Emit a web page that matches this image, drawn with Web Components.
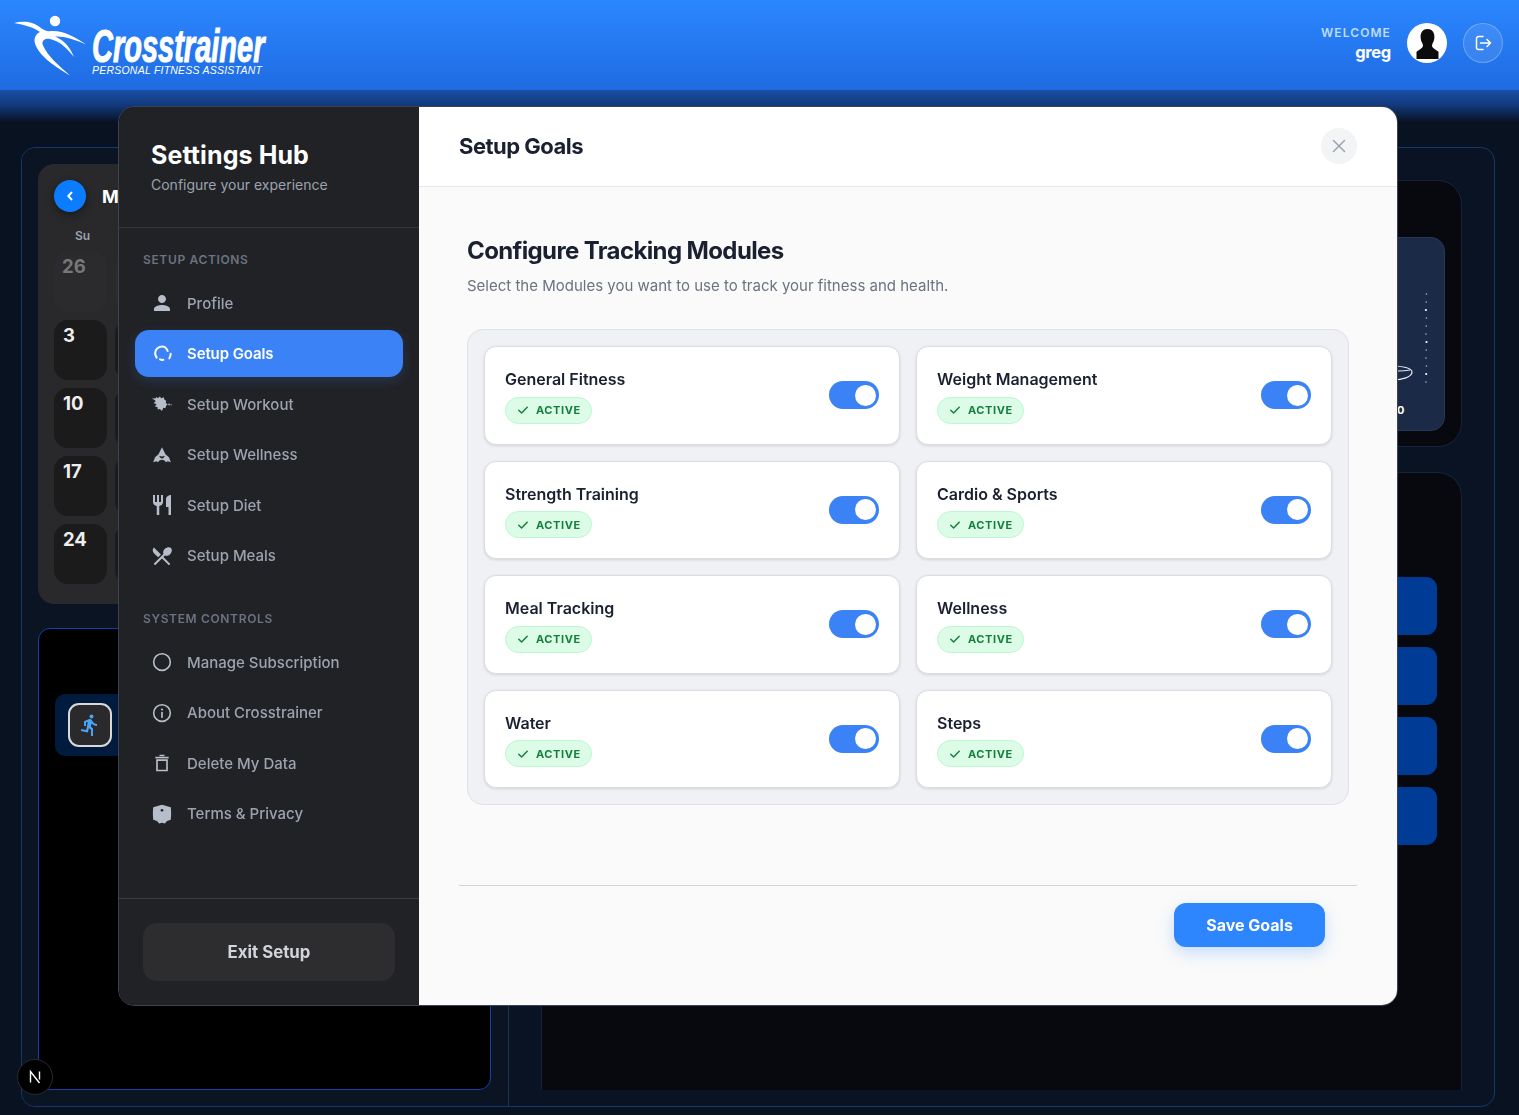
<!DOCTYPE html>
<html lang="en">
<head>
<meta charset="utf-8">
<title>Crosstrainer</title>
<style>
  html, body { height: 100%; }
  body {
    margin: 0;
    overflow: hidden;
    background: #081221;
    font-family: 'Inter', 'Liberation Sans', sans-serif;
  }
</style>
</head>
<body>
<app-header></app-header>
<dash-board></dash-board>
<settings-hub></settings-hub>
<dev-badge></dev-badge>

<script>
const ICONS = {
  profile: '<path fill="currentColor" d="M12 12c2.21 0 4-1.79 4-4s-1.79-4-4-4-4 1.79-4 4 1.79 4 4 4zm0 2c-2.67 0-8 1.34-8 4v2h16v-2c0-2.66-5.33-4-8-4z"/>',
  goals: '<g fill="none" stroke="currentColor" stroke-width="2.400" stroke-linecap="round"><path d="M5.600 16.400C3.400 13 3.300 9.800 5 7c2-3.400 6.500-5 10-3.600 1.600.7 3 2.800 3.800 5"/><path d="M22.400 11.600c0 2-.6 4-1.600 5.600"/><path d="M9.600 18.400c1.300.6 2.700.8 4 .6"/></g>',
  workout: '<path fill="currentColor" d="M0 5l4 .5L5.500 3.500 7 5l2.500-2L11 5l3-1 1 3 2 1-.5 3 2.500 1-2 2-1 3-2.500-.5-1.500 4-2.500-2.500-2.500.5-.5-3-3-.5 2-3-3.500-1 2.500-2.500z"/><circle cx="20.500" cy="12.500" r="1" fill="currentColor"/><circle cx="23" cy="13" r=".8" fill="currentColor"/>',
  wellness: '<path fill="currentColor" d="M12 2l4.500 9 4.500 4 2.500 6.500-4-1.500-2.500 1.500c-.6-2-2.600-3.200-5-3.200S7.600 19.600 7 21.500L4.500 20l-4 1.500L3 15l4.500-4z"/><path fill="#212226" d="M8.500 13c1.600 1.300 5.400 1.300 7 0-.5 2.400-1.900 3.400-3.500 3.400S9 15.400 8.500 13z"/>',
  diet: '<path fill="currentColor" d="M11 9H9V2H7v7H5V2H3v7c0 2.120 1.660 3.840 3.750 3.970V22h2.500v-9.030C11.340 12.840 13 11.120 13 9V2h-2v7zm5-3v8h2.500v8H21V2c-2.760 0-5 2.240-5 4z"/>',
  meals: '<path fill="currentColor" d="M8.100 13.340l2.830-2.830L3.910 3.500c-1.560 1.560-1.560 4.090 0 5.660l4.190 4.180zm6.780-1.810c1.530.71 3.680.21 5.270-1.380 1.910-1.910 2.280-4.650.81-6.120-1.460-1.460-4.200-1.100-6.120.81-1.590 1.590-2.090 3.740-1.380 5.270L3.700 19.870l1.410 1.410L12 14.410l6.880 6.880 1.410-1.410L13.410 13l1.470-1.470z"/>',
  subscription: '<circle cx="12" cy="12" r="10" fill="none" stroke="currentColor" stroke-width="1.900"/>',
  about: '<circle cx="12" cy="12" r="10" fill="none" stroke="currentColor" stroke-width="1.900"/><path d="M12 11.500v5.500" stroke="currentColor" stroke-width="2" stroke-linecap="round"/><circle cx="12" cy="7.800" r="1.300" fill="currentColor"/>',
  trash: '<g fill="none" stroke="currentColor" stroke-width="2"><path d="M4 5.500h16"/><path d="M9 3h6" stroke-width="1.800"/><path d="M6 8.500h12V21H6z"/></g>',
  shield: '<path fill="currentColor" d="M12 1l10.500 3c.6 4 .6 10 0 15L18 20.500l-2.500 3-3.500-1-3.500 1-2.500-3L1.500 19c-.6-5-.6-11 0-15z"/><circle cx="12" cy="7.500" r="1.600" fill="#212226"/>'
};
// the filled icons fill less of their 24 box than the hand drawn ones
const ICON_BOX = { profile: '2 2 20 20', diet: '2 2 20 20', meals: '2 2 20 20', wellness: '-1 -1 26 26' };

class AppHeader extends HTMLElement {
  constructor() {
    super();
    this.attachShadow({ mode: 'open' });
  }

  connectedCallback() {
    this.shadowRoot.innerHTML = `
      <style>
        :host {
          display: block;
          position: relative;
          z-index: 1;
          height: 90px;
          background: linear-gradient(180deg, #2b87ff 0%, #1f6be2 100%);
          color: #fff;
          font-family: 'Inter', 'Liberation Sans', sans-serif;
        }
        :host::after {
          content: '';
          position: absolute;
          left: 0;
          right: 0;
          top: 90px;
          height: 33px;
          background: linear-gradient(180deg, #1a4fa6 0%, #123a7c 45%, #07101f 100%);
        }
        header {
          display: flex;
          justify-content: space-between;
          align-items: center;
          height: 100%;
          padding: 0 16px 0 14px;
        }
        .brand { display: flex; align-items: flex-start; align-self: flex-start; }
        .brand svg { display: block; width: 74px; height: 64px; margin-top: 12px; }
        .words { margin: 27px 0 0 4px; width: 176px; }
        .name {
          display: block;
          height: 37px;
          font: italic 700 47px/37px 'Liberation Sans', sans-serif;
          -webkit-text-stroke: 1.100px #fff;
          transform: scaleX(.617);
          transform-origin: left center;
          white-space: nowrap;
        }
        .tag {
          display: block;
          font: italic 400 10.500px/12px 'Liberation Sans', sans-serif;
          letter-spacing: .22px;
          white-space: nowrap;
        }
        .user { display: flex; align-items: center; padding-bottom: 4px; }
        .hello { text-align: right; margin-right: 16px; }
        .hello small {
          display: block;
          font-size: 12px;
          line-height: 16px;
          font-weight: 600;
          letter-spacing: 1.100px;
          color: #bfdbfe;
        }
        .hello b { display: block; margin-top: 1px; font-size: 16.500px; line-height: 20px; font-weight: 700; letter-spacing: -.3px; }
        .avatar {
          width: 40px;
          height: 40px;
          border-radius: 50%;
          background: #fff;
          overflow: hidden;
          margin-right: 16px;
        }
        .avatar svg { display: block; }
        .out {
          display: flex;
          align-items: center;
          justify-content: center;
          width: 38px;
          height: 38px;
          border-radius: 50%;
          background: rgba(255,255,255,.1);
          border: 1px solid rgba(255,255,255,.25);
        }
      </style>
      <header>
        <div class="brand">
          <svg viewBox="14 12 74 64" aria-hidden="true">
            <circle cx="55" cy="21" r="5.200" fill="#fff"/>
            <path fill="#fff" d="M14 23c9-2.500 19-1.800 27 5 3 2.500 6 3.600 11 3 11-.5 23 6 34 13.500-11-5-22-8.500-31-8 7 3 14 8 19 20.500-6-7.500-13-15.500-24-18-5-.8-9 1.500-7 6.500 5 11 16 20 27 30-14-8.500-31-19-35-32-1.600-5.500 1-9.500 5-11.500-7-5-15-7-26-9z"/>
          </svg>
          <div class="words">
            <span class="name">Crosstrainer</span>
            <span class="tag">PERSONAL FITNESS ASSISTANT</span>
          </div>
        </div>
        <div class="user">
          <div class="hello"><small>WELCOME</small><b>greg</b></div>
          <div class="avatar">
            <svg width="40" height="40" viewBox="0 0 40 40">
              <path fill="#0b0b0b" d="M20.500 6c4.500 0 7 3.300 6.900 8-.1 2.500-.6 4.200-1.400 5.600-.7 1.400-1.200 2.900-.8 4.200 1 2 4 3 6.300 5V36H9.500v-7.200c2.300-2 5.300-3 6.300-5 .4-1.300-.1-2.800-.8-4.200-.8-1.400-1.300-3.100-1.400-5.600C13.500 9.300 16 6 20.500 6z"/>
            </svg>
          </div>
          <div class="out">
            <svg width="20" height="20" viewBox="0 0 20 20" fill="none" stroke="#fff" stroke-width="1.500" stroke-linecap="round" stroke-linejoin="round">
              <path d="M10 3.500H5.500a2 2 0 0 0-2 2v9a2 2 0 0 0 2 2H10"/>
              <path d="M7.500 10h10M14 6.500l3.500 3.500-3.500 3.500"/>
            </svg>
          </div>
        </div>
      </header>
    `;
  }
}

class CalPanel extends HTMLElement {
  constructor() {
    super();
    this.attachShadow({ mode: 'open' });
  }

  connectedCallback() {
    const weeks = [3, 10, 17, 24];
    let cells = '<div class="day old">26</div>' + '<div class="day old"></div>'.repeat(6);
    weeks.forEach((n) => {
      cells += `<div class="day">${n}</div>` + '<div class="day"></div>'.repeat(6);
    });
    this.shadowRoot.innerHTML = `
      <style>
        :host {
          display: block;
          height: 440px;
          box-sizing: border-box;
          padding: 16px;
          background: #29292b;
          border-radius: 16px;
          color: #fff;
        }
        .top { display: flex; align-items: center; gap: 16px; height: 32px; }
        .back {
          display: flex;
          align-items: center;
          justify-content: center;
          width: 32px;
          height: 32px;
          border-radius: 50%;
          background: #0b7bff;
          box-shadow: 0 3px 8px rgba(0,0,0,.4);
        }
        .month { font-size: 18px; font-weight: 700; }
        .dow { width: 53px; margin-top: 16px; text-align: center; font-size: 12px; line-height: 16px; font-weight: 600; color: #9ca3af; padding-left: 4px; box-sizing: border-box; }
        .grid {
          display: grid;
          grid-template-columns: repeat(7, 1fr);
          grid-auto-rows: 60px;
          gap: 8px;
          margin-top: 8px;
        }
        .day {
          padding: 3px 9px;
          border-radius: 14px;
          background: #1b1b1c;
          font-size: 18.500px;
          line-height: 24px;
          font-weight: 700;
          color: #eee;
        }
        .day.old { padding: 2px 8px; background: #2b2b2d; color: #77777a; }
      </style>
      <div class="top">
        <div class="back">
          <svg width="12" height="12" viewBox="0 0 10 10" fill="none" stroke="#fff" stroke-width="1.800" stroke-linecap="round" stroke-linejoin="round"><path d="M6.200 2.200L3.600 5l2.600 2.800"/></svg>
        </div>
        <div class="month">M</div>
      </div>
      <div class="dow">Su</div>
      <div class="grid">${cells}</div>
    `;
  }
}

class DashBoard extends HTMLElement {
  constructor() {
    super();
    this.attachShadow({ mode: 'open' });
  }

  connectedCallback() {
    let dots = '';
    for (let i = 0; i < 12; i++) {
      const y = 56 + i * 8;
      dots += `<circle cx="${38.500 - (i % 3) * .3}" cy="${y}" r="${i % 4 === 2 ? 1.100 : .8}" fill="${i % 4 === 2 ? '#fff' : '#aab4c4'}"/>`;
    }
    this.shadowRoot.innerHTML = `
      <style>
        :host {
          display: grid;
          grid-template-columns: 487px 1fr;
          box-sizing: border-box;
          width: 1474px;
          height: 960px;
          margin: 57px 0 0 21px;
          border: 1px solid #12396c;
          border-radius: 14px;
          background: #091324;
          font-family: 'Inter', 'Liberation Sans', sans-serif;
        }
        .left {
          display: flex;
          flex-direction: column;
          gap: 24px;
          padding: 16px 17px 16px 16px;
          border-right: 1px solid #1d3450;
          background: #0a1423;
          border-radius: 14px 0 0 14px;
        }
        .runs {
          flex: 1;
          padding: 65px 16px 0;
          background: #000;
          border: 1px solid #1a3fa8;
          border-radius: 12px;
        }
        .run-row {
          display: flex;
          align-items: center;
          height: 62px;
          padding: 0 13px;
          border-radius: 10px;
          background: #001b3d;
        }
        .tile {
          display: flex;
          align-items: center;
          justify-content: center;
          box-sizing: border-box;
          width: 44px;
          height: 44px;
          border: 2px solid #d8d8d8;
          border-radius: 11px;
          background: #2a2a2c;
        }
        .right {
          display: flex;
          flex-direction: column;
          gap: 25px;
          padding: 32px 32px 16px 32px;
        }
        .card {
          box-sizing: border-box;
          padding: 56px 16px 16px;
          background: #07090e;
          border: 1px solid #15233a;
          border-radius: 24px;
        }
        .one { height: 267px; }
        .two { flex: 1; padding-top: 104px; border-bottom: 0; border-radius: 24px 24px 0 0; display: flex; flex-direction: column; gap: 12px; padding-right: 24px; }
        .gauge {
          display: flex;
          justify-content: flex-end;
          height: 194px;
          background: #1b2b47;
          border: 1px solid #26375a;
          box-sizing: border-box;
          border-radius: 14px;
        }
        .block { height: 58px; flex: none; border-radius: 11px; background: #003c96; }
        svg { display: block; }
        text { font: 700 11px 'Inter', 'Liberation Sans', sans-serif; fill: #fff; }
      </style>
      <div class="left">
        <cal-panel></cal-panel>
        <div class="runs">
          <div class="run-row">
            <div class="tile">
              <svg width="24" height="24" viewBox="0 0 24 24"><path fill="#4aa3f5" d="M13.490 5.480c1.100 0 2-.9 2-2s-.9-2-2-2-2 .9-2 2 .9 2 2 2zm-3.600 13.900l1-4.400 2.100 2v6h2v-7.500l-2.100-2 .6-3c1.300 1.500 3.300 2.500 5.500 2.500v-2c-1.900 0-3.500-1-4.300-2.400l-1-1.600c-.4-.6-1-1-1.700-1-.3 0-.5.1-.8.1l-5.200 2.200v4.700h2v-3.400l1.800-.7-1.600 8.100-4.900-1-.4 2 7 1.400z"/></svg>
            </div>
          </div>
        </div>
      </div>
      <div class="right">
        <div class="card one">
          <div class="gauge">
            <svg width="56" height="192" viewBox="0 0 56 192">
              ${dots}
              <path d="M5 128c9 0 19 2 19 6 0 5-10 8-19 8" fill="none" stroke="#e8edf5" stroke-width="1.200"/>
              <path d="M5 133c6 0 12 0 17-1" fill="none" stroke="#e8edf5" stroke-width="1"/>
              <text x="9" y="176">0</text>
            </svg>
          </div>
        </div>
        <div class="card two">
          <div class="block"></div>
          <div class="block"></div>
          <div class="block"></div>
          <div class="block"></div>
        </div>
      </div>
    `;
  }
}

class HubItem extends HTMLElement {
  constructor() {
    super();
    this.attachShadow({ mode: 'open' });
  }

  connectedCallback() {
    const name = this.getAttribute('icon');
    const icon = ICONS[name] || '';
    this.shadowRoot.innerHTML = `
      <style>
        :host {
          display: flex;
          align-items: center;
          gap: 15px;
          height: 47px;
          padding-left: 17px;
          border-radius: 14px;
          font-size: 15px;
          font-weight: 500;
          color: #9ca3af;
        }
        :host([active]) {
          background: #3b82f6;
          color: #fff;
          font-weight: 600;
          letter-spacing: -.1px;
          box-shadow: 0 4px 12px rgba(59,130,246,.2);
        }
        svg { display: block; width: 20px; height: 20px; flex: none; color: #b8bec9; overflow: visible; }
        :host([active]) svg { color: #fff; }
      </style>
      <svg viewBox="${ICON_BOX[name] || '0 0 24 24'}" aria-hidden="true">${icon}</svg>
      <slot></slot>
    `;
  }
}

class ModuleCard extends HTMLElement {
  constructor() {
    super();
    this.attachShadow({ mode: 'open' });
  }

  connectedCallback() {
    this.shadowRoot.innerHTML = `
      <style>
        :host {
          display: flex;
          align-items: center;
          justify-content: space-between;
          box-sizing: border-box;
          padding: 0 20px;
          background: #fff;
          border: 1px solid #dcdde1;
          border-radius: 12px;
          box-shadow: 0 1px 3px rgba(0,0,0,.12);
        }
        .title { padding-top: .3px; font-size: 16px; line-height: 24px; font-weight: 600; color: #1a2030; }
        .badge {
          display: inline-flex;
          align-items: center;
          gap: 7px;
          box-sizing: border-box;
          height: 27px;
          margin-top: 5.700px;
          padding: 0 10px 0 11px;
          border: 1px solid #bbf7d0;
          border-radius: 14px;
          background: #dcfce7;
          font-size: 11px;
          font-weight: 700;
          letter-spacing: .6px;
          color: #15803d;
        }
        .switch {
          display: flex;
          justify-content: flex-end;
          align-items: center;
          box-sizing: border-box;
          width: 50px;
          height: 28px;
          padding-right: 3px;
          border-radius: 14px;
          background: #3b82f6;
        }
        .knob { width: 21px; height: 21px; border-radius: 50%; background: #fff; }
      </style>
      <div>
        <div class="title"><slot></slot></div>
        <div class="badge">
          <svg width="12" height="12" viewBox="0 0 12 12" fill="none" stroke="#15803d" stroke-width="1.500" stroke-linecap="round" stroke-linejoin="round"><path d="M1.800 6.300l2.800 2.700 5.600-5.800"/></svg>
          ACTIVE
        </div>
      </div>
      <div class="switch"><div class="knob"></div></div>
    `;
  }
}

class SettingsHub extends HTMLElement {
  constructor() {
    super();
    this.attachShadow({ mode: 'open' });
  }

  connectedCallback() {
    this.shadowRoot.innerHTML = `
      <style>
        :host {
          position: fixed;
          z-index: 5;
          left: 118px;
          top: 106px;
          display: grid;
          grid-template-columns: 300px 1fr;
          box-sizing: border-box;
          width: 1280px;
          height: 900px;
          overflow: hidden;
          border: 1px solid #3d4250;
          border-radius: 16px;
          font-family: 'Inter', 'Liberation Sans', sans-serif;
        }
        aside {
          display: flex;
          flex-direction: column;
          background: #212226;
          color: #fff;
        }
        .hub-head {
          box-sizing: border-box;
          height: 121px;
          padding: 32px 32px 0;
          border-bottom: 1px solid #33353a;
        }
        h2 { margin: 0; font-size: 25px; line-height: 32px; font-weight: 700; letter-spacing: .1px; }
        .hub-head p { margin: 4px 0 0; font-size: 14px; line-height: 20px; color: #9ca3af; }
        nav {
          flex: 1;
          display: flex;
          flex-direction: column;
          gap: 3.500px;
          padding: 24px 16px 0;
        }
        .label {
          margin: 0 0 9px 8px;
          font-size: 12px;
          line-height: 15px;
          font-weight: 600;
          letter-spacing: .65px;
          color: #6b7280;
        }
        .label.next { margin-top: 28px; margin-bottom: 9.500px; }
        .hub-foot {
          box-sizing: border-box;
          height: 107px;
          padding: 24px;
          border-top: 1px solid #3a3c41;
        }
        .exit {
          display: flex;
          align-items: center;
          justify-content: center;
          height: 58px;
          border-radius: 14px;
          background: #2d2d2f;
          font-size: 16.800px;
          font-weight: 700;
          color: #d1d5db;
        }
        main {
          display: flex;
          flex-direction: column;
          min-width: 0;
          background: #fafafa;
        }
        .main-head {
          display: flex;
          align-items: center;
          justify-content: space-between;
          flex: none;
          box-sizing: border-box;
          height: 80px;
          padding: 0 40px 1px;
          background: #fff;
          border-bottom: 1px solid #e5e7eb;
        }
        h1 { margin: 0; font-size: 22px; line-height: 28px; font-weight: 700; letter-spacing: -.5px; color: #1a2030; }
        .close {
          display: flex;
          align-items: center;
          justify-content: center;
          width: 36px;
          height: 36px;
          border-radius: 50%;
          background: #f3f4f6;
        }
        .content { flex: 1; padding: 48px 48px 0; }
        h3 { margin: 0; font-size: 24px; line-height: 32px; font-weight: 700; letter-spacing: -.62px; color: #1a2030; }
        .content p { margin: 8px 0 0; font-size: 15px; line-height: 22px; color: #6b7280; }
        .modules {
          display: grid;
          grid-template-columns: 1fr 1fr;
          grid-auto-rows: 98.500px;
          gap: 16px;
          box-sizing: border-box;
          margin-top: 32px;
          padding: 16px;
          background: #f0f1f5;
          border: 1px solid #dfe1e6;
          border-radius: 16px;
        }
        .main-foot {
          display: flex;
          justify-content: flex-end;
          flex: none;
          box-sizing: border-box;
          height: 120px;
          margin: 0 40px;
          padding: 17px 32px 0 0;
          border-top: 1px solid #d4d4d4;
        }
        .save {
          display: flex;
          align-items: center;
          justify-content: center;
          width: 151px;
          height: 44px;
          border-radius: 12px;
          background: #2e86ff;
          box-shadow: 0 6px 16px rgba(46,134,255,.25);
          font-size: 16px;
          font-weight: 700;
          color: #fff;
        }
      </style>
      <aside>
        <div class="hub-head">
          <h2>Settings Hub</h2>
          <p>Configure your experience</p>
        </div>
        <nav>
          <div class="label">SETUP ACTIONS</div>
          <hub-item icon="profile">Profile</hub-item>
          <hub-item icon="goals" active>Setup Goals</hub-item>
          <hub-item icon="workout">Setup Workout</hub-item>
          <hub-item icon="wellness">Setup Wellness</hub-item>
          <hub-item icon="diet">Setup Diet</hub-item>
          <hub-item icon="meals">Setup Meals</hub-item>
          <div class="label next">SYSTEM CONTROLS</div>
          <hub-item icon="subscription">Manage Subscription</hub-item>
          <hub-item icon="about">About Crosstrainer</hub-item>
          <hub-item icon="trash">Delete My Data</hub-item>
          <hub-item icon="shield">Terms &amp; Privacy</hub-item>
        </nav>
        <div class="hub-foot"><div class="exit">Exit Setup</div></div>
      </aside>
      <main>
        <div class="main-head">
          <h1>Setup Goals</h1>
          <div class="close">
            <svg width="14" height="14" viewBox="0 0 14 14" stroke="#9ca3af" stroke-width="1.500" stroke-linecap="round"><path d="M1.500 1.500l11 11M12.500 1.500l-11 11"/></svg>
          </div>
        </div>
        <div class="content">
          <h3>Configure Tracking Modules</h3>
          <p>Select the Modules you want to use to track your fitness and health.</p>
          <div class="modules">
            <module-card>General Fitness</module-card>
            <module-card>Weight Management</module-card>
            <module-card>Strength Training</module-card>
            <module-card>Cardio &amp; Sports</module-card>
            <module-card>Meal Tracking</module-card>
            <module-card>Wellness</module-card>
            <module-card>Water</module-card>
            <module-card>Steps</module-card>
          </div>
        </div>
        <div class="main-foot"><div class="save">Save Goals</div></div>
      </main>
    `;
  }
}

class DevBadge extends HTMLElement {
  constructor() {
    super();
    this.attachShadow({ mode: 'open' });
  }

  connectedCallback() {
    this.shadowRoot.innerHTML = `
      <style>
        :host {
          position: fixed;
          z-index: 6;
          left: 17px;
          bottom: 20px;
          display: flex;
          align-items: center;
          justify-content: center;
          box-sizing: border-box;
          width: 36px;
          height: 36px;
          border-radius: 50%;
          background: #000;
          border: 1px solid #2b2b2b;
        }
      </style>
      <svg width="14" height="14" viewBox="0 0 14 14" fill="none" stroke="#fff" stroke-width="1.400"><path d="M2.500 12.500V1.500l9 11.500M11.500 1.500v8"/></svg>
    `;
  }
}

customElements.define('hub-item', HubItem);
customElements.define('module-card', ModuleCard);
customElements.define('cal-panel', CalPanel);
customElements.define('app-header', AppHeader);
customElements.define('dash-board', DashBoard);
customElements.define('settings-hub', SettingsHub);
customElements.define('dev-badge', DevBadge);
</script>
</body>
</html>
